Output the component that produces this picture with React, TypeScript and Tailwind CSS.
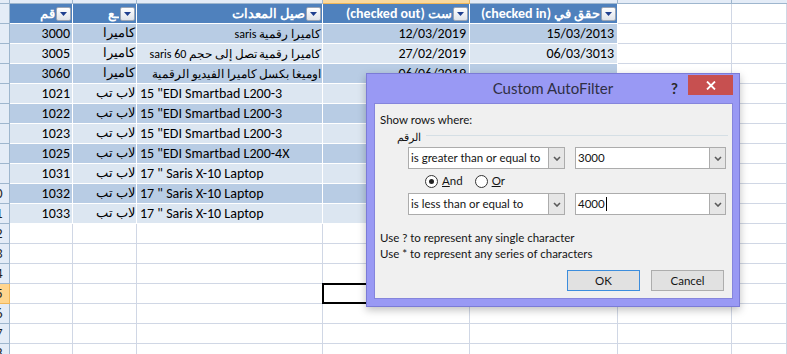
import React from 'react'

type Row = {
  num: string
  type: string
  desc: string
  descLtr?: boolean
  out: string
  inn: string
}

const rows: Row[] = [
  { num: '3000', type: 'كاميرا', desc: 'كاميرا  رقمية saris', out: '12/03/2019', inn: '15/03/2013' },
  { num: '3005', type: 'كاميرا', desc: 'كاميرا رقمية تصل إلى حجم saris 60', out: '27/02/2019', inn: '06/03/3013' },
  { num: '3060', type: 'كاميرا', desc: 'اوميغا بكسل كاميرا الفيديو الرقمية', out: '06/06/2019', inn: '' },
  { num: '1021', type: 'لاب تب', desc: '15 "EDI Smartbad L200-3', descLtr: true, out: '', inn: '' },
  { num: '1022', type: 'لاب تب', desc: '15 "EDI Smartbad L200-3', descLtr: true, out: '', inn: '' },
  { num: '1023', type: 'لاب تب', desc: '15 "EDI Smartbad L200-3', descLtr: true, out: '', inn: '' },
  { num: '1025', type: 'لاب تب', desc: '15 "EDI Smartbad L200-4X', descLtr: true, out: '', inn: '' },
  { num: '1031', type: 'لاب تب', desc: '17 " Saris X-10 Laptop', descLtr: true, out: '', inn: '' },
  { num: '1032', type: 'لاب تب', desc: '17 " Saris X-10 Laptop', descLtr: true, out: '', inn: '' },
  { num: '1033', type: 'لاب تب', desc: '17 " Saris X-10 Laptop', descLtr: true, out: '', inn: '' },
]

const cell = 'h-full shrink-0 overflow-hidden whitespace-nowrap border-r border-b flex items-center'
const grid = 'border-[#d0d7e5]'
const inTable = 'border-white'
const arabic = 'text-[12.5px]'

function RowHead({ n, active }: { n: number; active?: boolean }) {
  return (
    <div
      className={`h-full w-[10px] shrink-0 overflow-hidden border-r border-b ${
        active ? 'bg-[#ffd58e] border-[#f0b75a]' : 'bg-[#e4ecf7] border-[#9eb6ce]'
      }`}
    >
      <div className="ml-[-18px] w-[27px] text-center text-[14px] leading-[19px] text-[#1f1f1f]">{n}</div>
    </div>
  )
}

function FilterBtn() {
  return (
    <span className="ml-px mr-[1px] flex h-[14px] w-[15px] shrink-0 items-center justify-center rounded-[2px] border border-[#9aa4b4] bg-gradient-to-b from-white to-[#dfe3ea]">
      <svg width="7" height="4" viewBox="0 0 7 4">
        <path d="M0 0h7L3.5 4z" fill="#1f3f8f" />
      </svg>
    </span>
  )
}

function HeadCell({ w, children }: { w: string; children: React.ReactNode }) {
  return (
    <div className={`${cell} ${inTable} ${w} justify-end bg-[#4f81bd] font-bold text-white`}>
      <span className="overflow-hidden whitespace-nowrap">{children}</span>
      <FilterBtn />
    </div>
  )
}

function Chevron() {
  return (
    <svg width="8" height="5" viewBox="0 0 8 5">
      <path d="M1 1l3 3 3-3" fill="none" stroke="#5a5a5a" strokeWidth="1.6" />
    </svg>
  )
}

function Combo({ w, text, caret }: { w: string; text: string; caret?: boolean }) {
  return (
    <div className={`flex h-[22px] ${w} items-stretch border border-[#acacac] bg-white`}>
      <div className="flex flex-1 items-center overflow-hidden whitespace-nowrap pl-[2px]">
        {text}
        {caret && <span className="ml-px h-[14px] w-px bg-black" />}
      </div>
      <div className="flex w-[16px] items-center justify-center border-l border-[#acacac] bg-[#e6e6e6]">
        <Chevron />
      </div>
    </div>
  )
}

function Radio({ checked }: { checked?: boolean }) {
  return (
    <span className="flex h-[13px] w-[13px] items-center justify-center rounded-full border border-[#333] bg-white">
      {checked && <span className="h-[5px] w-[5px] rounded-full bg-[#222]" />}
    </span>
  )
}

function Dialog() {
  return (
    <div className="absolute left-[366px] top-[73px] flex h-[234px] w-[374px] flex-col border border-[#7b7bd6] bg-[#9999f4] shadow-[0_3px_8px_rgba(0,0,0,0.25)] font-['Lato',sans-serif]">
      <div className="relative flex h-[29px] shrink-0 items-center justify-center">
        <span className="text-[15px] text-[#2f2f45]">Custom AutoFilter</span>
        <span className="absolute right-[61px] top-[3px] text-[15px] font-bold text-[#2a2a2a]">?</span>
        <span className="absolute right-[6px] top-[1px] flex h-[20px] w-[45px] items-center justify-center bg-[#c75050]">
          <svg width="10" height="9" viewBox="0 0 10 9">
            <path d="M1 0.5l8 8M9 0.5l-8 8" stroke="white" strokeWidth="1.8" />
          </svg>
        </span>
      </div>
      <div className="mb-[7px] ml-[7px] mr-[6px] flex flex-1 flex-col border border-[#8585dc] bg-[#f0f0f0] pl-[5px] pr-[4px] text-[11.5px] text-[#141414]">
        <div className="mt-[8px] h-[15px] leading-[15px]">Show rows where:</div>
        <div className="mt-[2px] flex h-[15px] items-center pl-[17px]">
          <span dir="rtl" className="text-[11px] leading-[15px]">الرقم</span>
          <span className="ml-[5px] mt-[-3px] h-px flex-1 bg-[#d5dfe5]" />
        </div>
        <div className="mt-[3px] flex gap-[10px] pl-[28px]">
          <Combo w="w-[157px]" text="is greater than or equal to" />
          <Combo w="w-[151px]" text="3000" />
        </div>
        <div className="mt-[4px] flex h-[16px] items-center pl-[45px]">
          <Radio checked />
          <span className="ml-[4px] leading-[16px]">
            <span className="underline">A</span>nd
          </span>
          <span className="ml-[12px]">
            <Radio />
          </span>
          <span className="ml-[4px] leading-[16px]">
            <span className="underline">O</span>r
          </span>
        </div>
        <div className="mt-[4px] flex gap-[10px] pl-[28px]">
          <Combo w="w-[157px]" text="is less than or equal to" />
          <Combo w="w-[151px]" text="4000" caret />
        </div>
        <div className="mt-[15px] h-[15px] leading-[15px]">Use ? to represent any single character</div>
        <div className="mt-[1px] h-[15px] leading-[15px]">Use * to represent any series of characters</div>
        <div className="mt-[9px] flex gap-[11px] pl-[187px]">
          <span className="flex h-[21px] w-[73px] items-center justify-center border border-[#3c8ddd] bg-[#e1e1e1]">OK</span>
          <span className="flex h-[21px] w-[73px] items-center justify-center border border-[#adadad] bg-[#e1e1e1]">Cancel</span>
        </div>
      </div>
    </div>
  )
}

export default function App() {
  const empties = [12, 13, 14, 15, 16, 17, 18]
  return (
    <div className="relative h-[354px] w-[787px] overflow-hidden bg-white font-['Carlito','Lato',sans-serif] text-[14px] text-black">
      {/* column header strip */}
      <div className="flex h-[4px]">
        <div className="h-full w-[10px] shrink-0 border-r border-b border-[#9eb6ce] bg-[#e4ecf7]" />
        <div className="h-full w-[63px] shrink-0 border-r border-b border-[#9eb6ce] bg-[#e4ecf7]" />
        <div className="h-full w-[64px] shrink-0 border-r border-b border-[#9eb6ce] bg-[#e4ecf7]" />
        <div className="h-full w-[186px] shrink-0 border-r border-b border-[#9eb6ce] bg-[#e4ecf7]" />
        <div className="h-full w-[147px] shrink-0 border-r border-b border-[#f0b75a] bg-[#f9d99f]" />
        <div className="h-full w-[148px] shrink-0 border-r border-b border-[#9eb6ce] bg-[#e4ecf7]" />
        <div className="h-full w-[114px] shrink-0 border-r border-b border-[#9eb6ce] bg-[#e4ecf7]" />
        <div className="h-full flex-1 border-b border-[#9eb6ce] bg-[#e4ecf7]" />
      </div>

      {/* header row */}
      <div className="flex h-[20px]">
        <RowHead n={1} />
        <HeadCell w="w-[63px]">
          <span dir="rtl" className={arabic}>قم</span>
        </HeadCell>
        <HeadCell w="w-[64px]">
          <span dir="rtl" className={arabic}>ـع</span>
        </HeadCell>
        <HeadCell w="w-[186px]">
          <span dir="rtl" className={arabic}>صيل المعدات</span>
        </HeadCell>
        <HeadCell w="w-[147px]">
          <span dir="ltr">
            (checked out) <span className={arabic}>ست</span>
          </span>
        </HeadCell>
        <HeadCell w="w-[148px]">
          <span dir="ltr">
            (checked in) <span className={arabic}>حقق في</span>
          </span>
        </HeadCell>
        <div className={`${cell} ${grid} w-[114px]`} />
        <div className={`${cell} ${grid} flex-1`} />
      </div>

      {rows.map((r, i) => {
        const band = i % 2 === 0 ? 'bg-[#b8cce4]' : 'bg-[#dce6f1]'
        return (
          <div key={i} className="flex h-[20px]">
            <RowHead n={i + 2} />
            <div className={`${cell} ${inTable} ${band} w-[63px] justify-end pr-[2px]`}>{r.num}</div>
            <div className={`${cell} ${inTable} ${band} w-[64px] justify-end pr-[1px]`}>
              <span dir="rtl" className={arabic}>{r.type}</span>
            </div>
            <div className={`${cell} ${inTable} ${band} w-[186px] ${r.descLtr ? 'justify-start pl-[3px]' : 'justify-end pr-[1px]'}`}>
              <span dir={r.descLtr ? 'ltr' : 'rtl'} className={r.descLtr ? '' : 'text-[12px]'}>{r.desc}</span>
            </div>
            <div className={`${cell} ${inTable} ${band} w-[147px] justify-end pr-[3px]`}>{r.out}</div>
            <div className={`${cell} ${inTable} ${band} w-[148px] justify-end pr-[3px]`}>{r.inn}</div>
            <div className={`${cell} ${grid} w-[114px]`} />
            <div className={`${cell} ${grid} flex-1`} />
          </div>
        )
      })}

      {empties.map((n) => (
        <div key={n} className="flex h-[20px]">
          <RowHead n={n} active={n === 15} />
          <div className={`${cell} ${grid} w-[63px]`} />
          <div className={`${cell} ${grid} w-[64px]`} />
          <div className={`${cell} ${grid} w-[186px]`} />
          <div className={`${cell} ${grid} relative w-[147px] overflow-visible`}>
            {n === 15 && <span className="absolute -left-px -top-px h-[21px] w-[148px] border-2 border-black" />}
          </div>
          <div className={`${cell} ${grid} w-[148px]`} />
          <div className={`${cell} ${grid} w-[114px]`} />
          <div className={`${cell} ${grid} flex-1`} />
        </div>
      ))}

      <Dialog />
    </div>
  )
}
